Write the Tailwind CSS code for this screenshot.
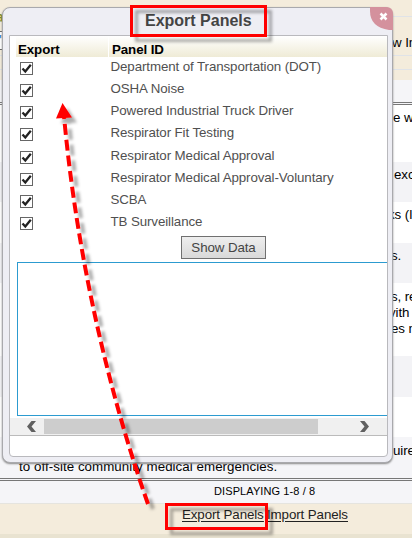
<!DOCTYPE html>
<html lang="en"><head><meta charset="utf-8"><title>Export Panels</title>
<script src="https://cdn.jsdelivr.net/npm/@tailwindcss/browser@4"></script></head>
<body class="relative w-[412px] h-[538px] overflow-hidden bg-white font-['Liberation_Sans',Arial,sans-serif] text-[13.33px] tracking-[-0.1px] leading-4 text-black">
<main class="flex flex-col h-[538px] whitespace-nowrap">
  <div class="h-[17px] shrink-0 bg-[#f4ecdc] border-b border-[#e0e3e8]"></div>
  <div class="h-[39px] shrink-0 bg-[#f4ecdc] border-b border-[#e0e3e8] pl-[392px] pt-[18px]">w In</div>
  <div class="h-[14px] shrink-0 bg-[#f4ecdc] border-b border-[#e0e3e8]"></div>
  <div class="h-[10px] shrink-0 bg-[#f4ecdc]"></div>
  <div class="h-[25px] shrink-0 bg-[#f5f5f8] border-b-3 border-double border-[#777]"></div>
  <div class="h-[57px] shrink-0 pl-[393px] pt-[5px]">e w</div>
  <div class="h-[40px] shrink-0 bg-[#f3f3f6] pl-[394px] pt-[5px]">exc</div>
  <div class="h-[41px] shrink-0 pl-[388px] pt-[5px]">ks (I</div>
  <div class="h-[40px] shrink-0 bg-[#f3f3f6] pl-[391px] pt-[5px]">s.</div>
  <div class="h-[73px] shrink-0 pt-[6px]"><p class="pl-[391px]">s, re</p><p class="pl-[389px]">vith</p><p class="pl-[391px]">es n</p></div>
  <div class="h-[41px] shrink-0 bg-[#f3f3f6]"></div>
  <div class="h-[40px] shrink-0"></div>
  <div class="h-[44px] shrink-0 bg-[#f5f5f8] border-b-3 border-double border-[#777] pt-[6px]"><p class="pl-[393px] h-4">uire</p><p class="pl-[19px] tracking-[0.05px]">to off-site community medical emergencies.</p></div>
  <div class="h-[22px] shrink-0 bg-[#f5f5f8] pl-[214px] pt-[2px] text-[11px] tracking-[0.1px]">DISPLAYING 1-8 / 8</div>
  <div class="h-[31px] shrink-0 bg-[#f4ecdc] border-t border-[#e5e4df] pl-[182px] pt-[3px] flex gap-1 text-[#222] underline underline-offset-2"><a class="w-[81px]">Export Panels</a><a>Import Panels</a></div>
  <div class="h-1 shrink-0 bg-[#e9e3d1]"></div>
</main>
<div class="absolute left-0 top-[10px] w-1 h-[92px] overflow-hidden flex flex-col"><b class="text-[#7d8a26] h-[21px] leading-[14px] text-[14px] -ml-1">a</b><span class="h-[19px] border-y border-[#666] bg-white text-[#2455a8] font-bold -ml-[2px]">",</span></div>

<section class="absolute left-[2px] top-[7px] w-[391px] h-[456px] rounded-[8px] bg-[#eeeef4] border border-[#a9a9ad] shadow-[0_1px_2px_#888] pt-[27px] pl-[6px] pr-[5px]">
  <div class="h-[422px] w-[379px] bg-white border border-[#b9b9bd] rounded-br-[4px] rounded-bl-[4px] flex flex-col whitespace-nowrap">
    <div class="ml-[6px] h-[21px] flex bg-linear-to-b from-white to-[#efebd6] font-bold leading-[27px]"><span class="w-[93px] pl-[2px] border-r border-white shrink-0">Export</span><span class="pl-[3px]">Panel ID</span></div>
    <ul class="h-[179px] pl-[10px] flex flex-col text-[#505050] shrink-0" id="panels"></ul>
    <button class="ml-[171px] w-[85px] h-[23px] shrink-0 border border-[#707070] bg-linear-to-b from-[#eee] to-[#d9d9d9] text-[#444] tracking-[-0.1px] leading-[20px]">Show Data</button>
    <div class="mt-[3px] ml-[7px] h-[154px] shrink-0 border border-r-0 border-[#2c9bd0]"></div>
    <div class="mt-[2px] h-[18px] shrink-0 bg-[#f0f0f0] border-b border-[#bbb] flex items-center">
      <svg class="w-[34px] h-[17px] shrink-0" viewBox="0 0 34 17"><path d="M21.500 3h4.500l-4.500 5.500L26 14h-4.500L17 8.500z" fill="#606060"/></svg>
      <div class="w-[274px] h-[15px] bg-[#cdcdcd]"></div>
      <svg class="w-[69px] h-[17px]" viewBox="0 0 69 17"><path d="M42 3h4.500l4.500 5.500-4.500 5.500H42l4.500-5.500z" fill="#606060"/></svg>
    </div>
  </div>
</section>
<h1 class="absolute left-[145px] top-[11px] text-[16px] tracking-normal leading-5 font-bold text-[#444] whitespace-nowrap">Export Panels</h1>
<svg class="absolute left-[370px] top-[7px]" width="23" height="23" viewBox="0 0 23 23"><path d="M0 0h16q7 0 7 7v16h-4Q0 20 0 4z" fill="#d4919d"/><path d="m10.500 6.500 6 6m0-6-6 6" stroke="#fff" stroke-width="2.500"/></svg>
<svg class="absolute inset-0 pointer-events-none" width="412" height="538" viewBox="0 0 412 538" fill="none">
  <defs><filter id="s" x="-30%" y="-30%" width="160%" height="160%"><feDropShadow dx="5" dy="5" stdDeviation="1.500" flood-color="#000" flood-opacity=".32"/></filter></defs>
  <g filter="url(#s)" stroke="#f00">
    <rect x="131.500" y="6.500" width="134" height="29" stroke-width="3"/>
    <rect x="166.500" y="504.500" width="100" height="24" stroke-width="3"/>
    <path d="M148 504C118 419 79 280 64 116" stroke-width="4" stroke-dasharray="11 4.800"/>
    <path d="M62.500 103 56 118.500l16-1z" fill="#f00" stroke="none"/>
  </g>
</svg>
<script>
const names = ["Department of Transportation (DOT)","OSHA Noise","Powered Industrial Truck Driver","Respirator Fit Testing","Respirator Medical Approval","Respirator Medical Approval-Voluntary","SCBA","TB Surveillance"];
document.getElementById("panels").innerHTML = names.map(n => `<li class="h-[22.14px] shrink-0 flex items-start"><span class="w-[90.5px] pt-[5px]"><svg width="13" height="13" viewBox="0 0 13 13"><rect x=".5" y=".5" width="12" height="12" fill="#fff" stroke="#666"/><path d="M2.500 6.500 5.300 9.500 10.800 2.800" fill="none" stroke="#222" stroke-width="2.300"/></svg></span><span class="pt-[2px]">${n}</span></li>`).join("");
</script>
</body></html>
